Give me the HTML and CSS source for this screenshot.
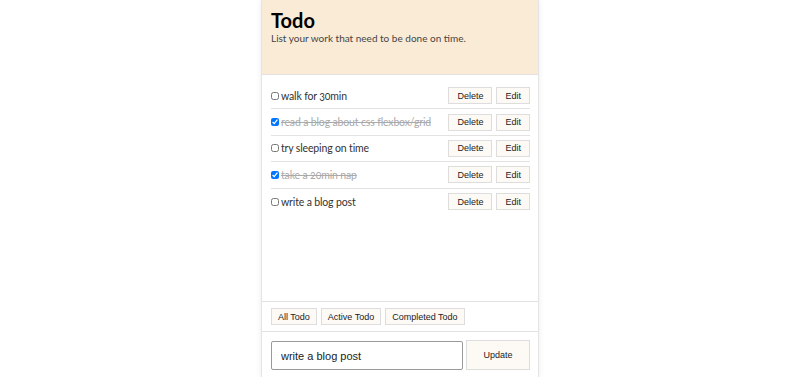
FILE: index.html
```html
<!DOCTYPE html>
<html lang="en">
<head>
  <meta charset="UTF-8">
  <title>Todo</title>
  <link rel="stylesheet" href="styles.css">
</head>
<body>

  <div class="app">
    <div class="header">
      <h1>Todo</h1>
      <p>List your work that need to be done on time.</p>
    </div>

    <ul class="list">
      <li><label><input type="checkbox"> walk for 30min</label><button>Delete</button><button>Edit</button></li>
      <li class="done"><label><input type="checkbox" checked> read a blog about css flexbox/grid</label><button>Delete</button><button>Edit</button></li>
      <li><label><input type="checkbox"> try sleeping on time</label><button>Delete</button><button>Edit</button></li>
      <li class="done"><label><input type="checkbox" checked> take a 20min nap</label><button>Delete</button><button>Edit</button></li>
      <li><label><input type="checkbox"> write a blog post</label><button>Delete</button><button>Edit</button></li>
    </ul>

    <div class="filters">
      <button>All Todo</button>
      <button>Active Todo</button>
      <button>Completed Todo</button>
    </div>

    <div class="add">
      <input id="todoText" value="write a blog post">
      <button>Update</button>
    </div>
  </div>

</body>
</html>
```

FILE: styles.css
```css
body {
  margin: 0;
  font-family: Lato, "Open Sans", sans-serif;
  font-variant-numeric: oldstyle-nums;
  background: #fff;
  color: #333;
}
.app {
  width: 278px;
  margin: 0 auto;
  height: 377px;
  border-left: 1px solid #e4e4e4;
  border-right: 1px solid #e4e4e4;
  box-shadow: 0 0 6px rgba(0, 0, 0, 0.08);
  box-sizing: border-box;
  display: flex;
  flex-direction: column;
}
.header {
  background: #faebd7;
  height: 75px;
  padding: 8px 9px;
  box-sizing: border-box;
  border-bottom: 1px solid #e2e2e2;
}
.header h1 {
  margin: 0;
  font-size: 20px;
  line-height: 24px;
  color: #000;
  font-weight: 700;
}
.header p {
  margin: 0;
  font-size: 10px;
  line-height: 12px;
  color: #444;
}
.list {
  list-style: none;
  margin: 0;
  padding: 8px 8px 0 9px;
  height: 227px;
  box-sizing: border-box;
  border-bottom: 1px solid #e2e2e2;
}
.list li {
  display: flex;
  align-items: center;
  gap: 4px;
  height: 26.4px;
  border-bottom: 1px solid #e2e2e2;
  box-sizing: border-box;
}
.list li:last-child {
  border-bottom: none;
}
.list label {
  flex: 1;
  font-size: 10.5px;
  letter-spacing: -0.15px;
  display: flex;
  align-items: center;
  white-space: nowrap;
  color: #333;
}
.list input {
  margin: 0 2px 0 0;
  width: 8px;
  height: 8px;
}
.list .done label {
  text-decoration: line-through;
  color: #aaa;
}
button {
  font-family: "Liberation Sans", Arial, sans-serif;
  font-size: 9px;
  background: #fdfaf5;
  border: 1px solid #ddd;
  color: #222;
  height: 17px;
  padding: 0 8px;
  cursor: pointer;
}
.filters {
  display: flex;
  gap: 4px;
  padding: 6px 8px 6px 9px;
  border-bottom: 1px solid #e2e2e2;
}
.filters button {
  padding: 0 6px;
}
.add {
  display: flex;
  gap: 3px;
  padding: 9px 8px 0 9px;
}
.add input {
  flex: 1;
  height: 29px;
  box-sizing: border-box;
  border: 1px solid #999;
  border-radius: 2px;
  font-family: "Liberation Sans", Arial, sans-serif;
  font-size: 11px;
  padding: 0 9px;
  color: #222;
}
.add button {
  width: 64px;
  height: 30px;
  margin-top: -1px;
  padding: 0;
}
```
